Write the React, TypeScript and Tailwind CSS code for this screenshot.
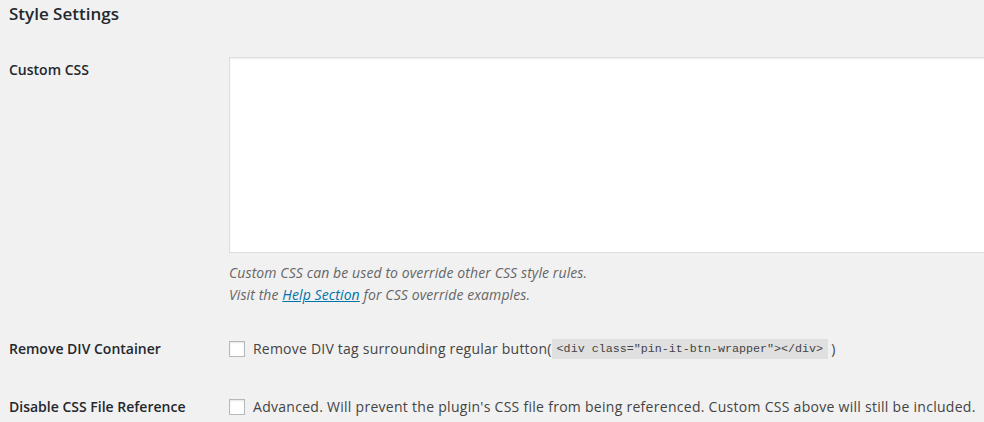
import { type JSX } from "react";

const Checkbox = (): JSX.Element => (
  <span className="inline-block h-4 w-4 shrink-0 border border-[#b4b9be] bg-white shadow-[inset_0_1px_2px_rgba(0,0,0,0.1)]" />
);

const Label = ({ children }: { children: string }): JSX.Element => (
  <div className="w-[220px] shrink-0 text-[14px] leading-5 font-semibold text-[#23282d]">{children}</div>
);

export default function App(): JSX.Element {
  return (
    <div
      className="h-[422px] w-[984px] overflow-hidden bg-[#f1f1f1] pl-[9px]"
      style={{ fontFamily: '"Open Sans", "Liberation Sans", sans-serif' }}
    >
      <h2 className="text-[17px] leading-[28px] font-semibold text-[#23282d]">Style Settings</h2>

      {/* custom css */}
      <div className="mt-[29px] flex">
        <div className="pt-[3px]">
          <Label>Custom CSS</Label>
        </div>
        <div>
          <div className="h-[196px] w-[790px] border border-[#dddddd] bg-white shadow-[inset_0_1px_2px_rgba(0,0,0,0.07)]" />
          <p className="mt-[9px] text-[14px] leading-[22px] tracking-[0.1px] text-[#666666] italic">
            Custom CSS can be used to override other CSS style rules.
            <br />
            Visit the{" "}
            <a href="#" className="text-[#0073aa] underline">
              Help Section
            </a>{" "}
            for CSS override examples.
          </p>
        </div>
      </div>

      {/* remove div */}
      <div className="mt-[33px] flex items-center">
        <Label>Remove DIV Container</Label>
        <div className="flex items-center text-[14px] leading-5 tracking-[0.22px] text-[#444444]">
          <Checkbox />
          <span className="ml-2">Remove DIV tag surrounding regular button(</span>
          <code
            className="bg-[rgba(0,0,0,0.07)] px-[5px] py-[2px] text-[11.7px] leading-4 tracking-normal text-[#444444]"
            style={{ fontFamily: '"Liberation Mono", monospace' }}
          >
            {'<div class="pin-it-btn-wrapper"></div>'}
          </code>
          <span className="ml-[3px]">)</span>
        </div>
      </div>

      {/* disable css file */}
      <div className="mt-[38px] flex items-center">
        <Label>Disable CSS File Reference</Label>
        <div className="flex items-center text-[14px] leading-5 tracking-[0.28px] text-[#444444]">
          <Checkbox />
          <span className="ml-2">
            Advanced. Will prevent the plugin's CSS file from being referenced. Custom CSS above will still be
            included.
          </span>
        </div>
      </div>
    </div>
  );
}
